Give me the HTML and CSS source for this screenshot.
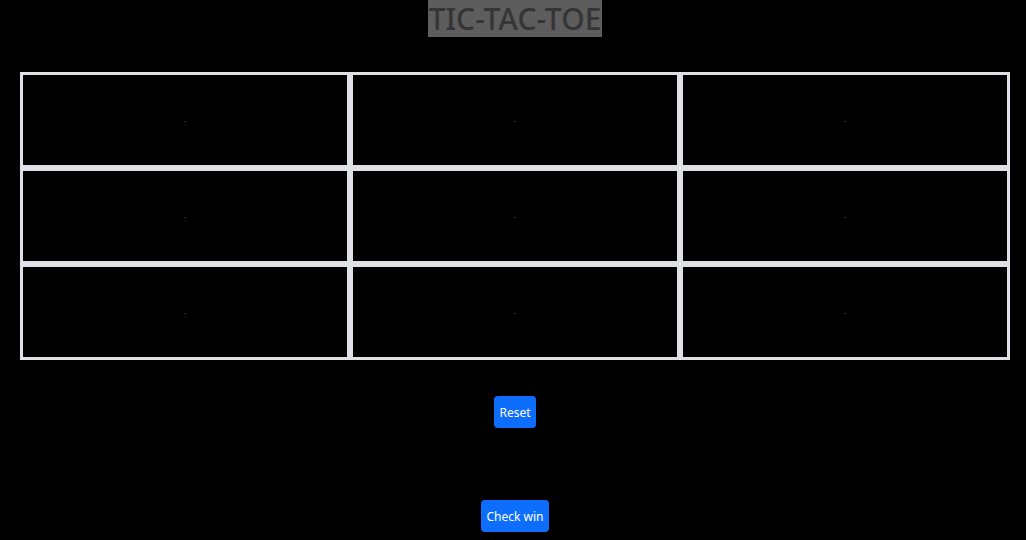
FILE: index.html
```html
<!DOCTYPE html>
<html>
<head>
<meta charset="utf-8">
<link rel="stylesheet" href="styles.css">
</head>
<body>
<div class="page">
  <div class="title-wrap"><h1 class="title">TIC-TAC-TOE</h1></div>
  <table class="board">
    <tr><td>-</td><td>-</td><td>-</td></tr>
    <tr><td>-</td><td>-</td><td>-</td></tr>
    <tr><td>-</td><td>-</td><td>-</td></tr>
  </table>
  <div class="actions">
    <button class="btn reset">Reset</button>
    <button class="btn check">Check win</button>
  </div>
</div>
</body>
</html>
```
FILE: styles.css
```css
html, body {
  margin: 0;
  padding: 0;
  background: #000;
}
body {
  font-family: "Noto Sans", "Open Sans", sans-serif;
  width: 1026px;
  height: 540px;
  overflow: hidden;
}
.page {
  padding: 0 16px 0 20px;
}
.title-wrap {
  display: flex;
  justify-content: center;
}
.title {
  margin: 0;
  height: 37px;
  line-height: 38px;
  font-size: 30px;
  font-weight: 500;
  background: #5d5d5d;
  color: #353535;
  padding: 0 1px;
}
.board {
  margin-top: 35px;
  width: 990px;
  border-collapse: separate;
  border-spacing: 0;
  table-layout: fixed;
}
.board td {
  border: 3px solid #dee2e6;
  height: 90px;
  padding: 0;
  text-align: center;
  vertical-align: middle;
  font-size: 9px;
  color: #3a3a3a;
}
.actions {
  display: flex;
  flex-direction: column;
  align-items: center;
  gap: 72px;
  margin-top: 36px;
}
.btn {
  font-family: "Noto Sans", "Open Sans", sans-serif;
  font-size: 12px;
  height: 32px;
  padding: 0 5px;
  border: none;
  border-radius: 4px;
  background: #0d6efd;
  color: #fff;
}
```
